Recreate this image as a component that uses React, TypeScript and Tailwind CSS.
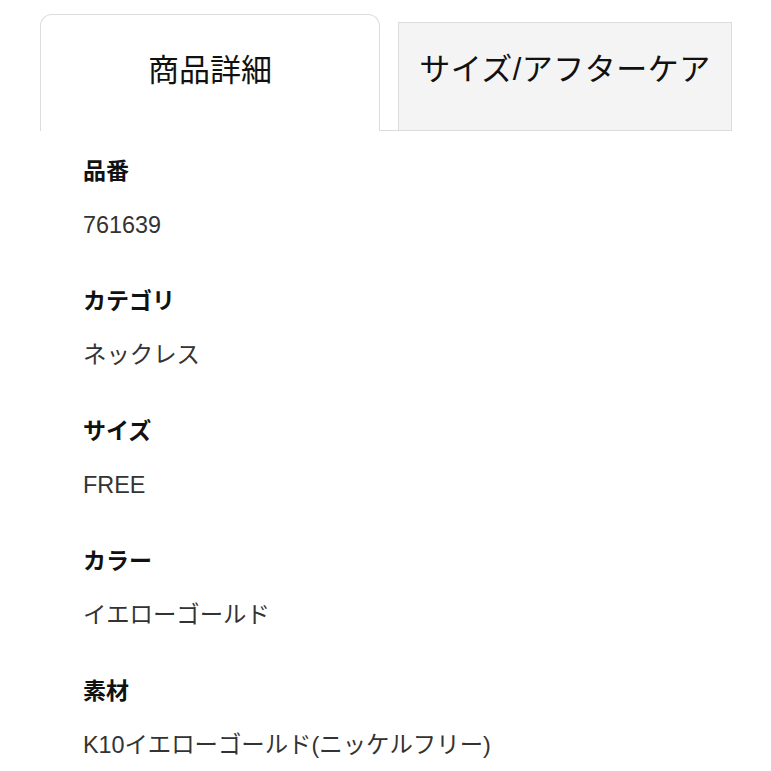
const specs = [
  { label: "品番", value: "761639" },
  { label: "カテゴリ", value: "ネックレス" },
  { label: "サイズ", value: "FREE" },
  { label: "カラー", value: "イエローゴールド" },
  { label: "素材", value: "K10イエローゴールド(ニッケルフリー)" },
];

export default function App() {
  return (
    <div className="min-h-screen w-[771px] bg-white font-['Liberation_Sans','Noto_Sans_CJK_JP',sans-serif]">
      {/* Tabs */}
      <div className="flex items-end pl-[40px] pt-[14px]">
        <div className="flex h-[117px] w-[340px] items-center justify-center rounded-t-[12px] border border-b-0 border-[#dcdcdc] bg-white pb-[4px] text-[31px] text-[#111]">
          商品詳細
        </div>
        <div className="h-[117px] w-[18px] border-b border-[#dcdcdc]" />
        <div className="flex h-[109px] w-[334px] items-center justify-center border border-[#dcdcdc] bg-[#f4f4f4] pb-[12px] text-[31px] tracking-[0.5px] text-[#111]">
          サイズ/アフターケア
        </div>
      </div>

      {/* Spec list */}
      <dl className="flex flex-col gap-[46px] px-[83px] pt-[25px]">
        {specs.map((s) => (
          <div key={s.label} className="flex flex-col gap-[24px]">
            <dt className="text-[23px] font-bold leading-[30px] text-[#111]">{s.label}</dt>
            <dd className="text-[23.4px] leading-[30px] text-[#333]">{s.value}</dd>
          </div>
        ))}
      </dl>
    </div>
  );
}
